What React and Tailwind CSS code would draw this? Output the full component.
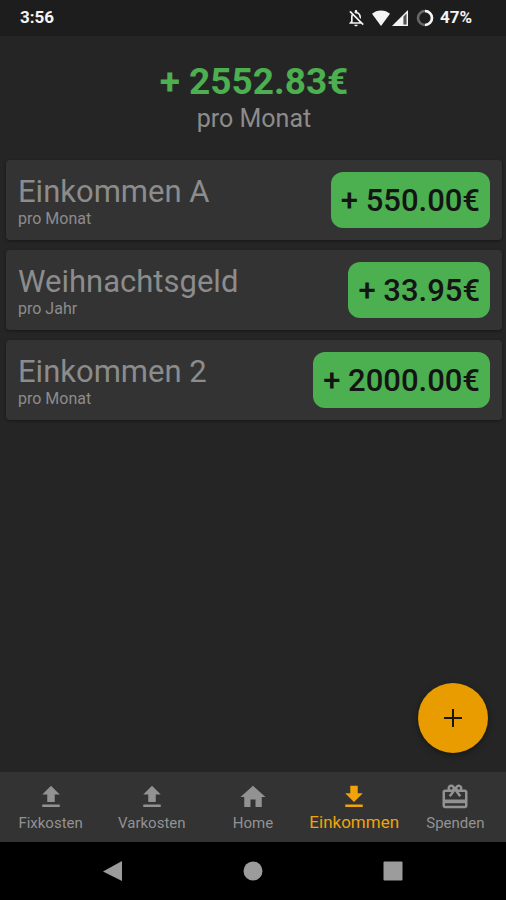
import { MdCardGiftcard, MdFileDownload, MdFileUpload, MdHome, MdOutlineNotificationsOff } from 'react-icons/md';

const incomes = [
  { name: 'Einkommen A', period: 'pro Monat', amount: '+ 550.00€' },
  { name: 'Weihnachtsgeld', period: 'pro Jahr', amount: '+ 33.95€' },
  { name: 'Einkommen 2', period: 'pro Monat', amount: '+ 2000.00€' },
];

const tabs = [
  { label: 'Fixkosten', icon: MdFileUpload },
  { label: 'Varkosten', icon: MdFileUpload },
  { label: 'Home', icon: MdHome },
  { label: 'Einkommen', icon: MdFileDownload, active: true },
  { label: 'Spenden', icon: MdCardGiftcard },
];

function StatusBar() {
  return (
    <div className="flex h-9 items-center justify-between bg-[#1d1d1d] pr-[34px] pl-5 text-[17px] font-bold text-[#f4f4f4]">
      <span>3:56</span>
      <div className="flex items-center">
        <MdOutlineNotificationsOff className="size-5" />
        <svg className="ml-1.5 h-4 w-[18px]" viewBox="0 0 18 16" fill="currentColor">
          <path d="M0 3.8C2.4 1.7 5.5.5 9 .5s6.600 1.200 9 3.300L9 16z" />
        </svg>
        <svg className="ml-0.5 size-4" viewBox="0 0 16 16" fill="currentColor">
          <path fillRule="evenodd" d="M16 0v16H0zM14.500 3.600 11.500 6.600V14.500h3z" />
          <path d="M11.500 6.600 14.500 3.600V14.500h-3z" opacity="0.25" />
        </svg>
        {/* Battery ring */}
        <svg className="ml-2 size-[18px]" viewBox="0 0 18 18" fill="none" stroke="currentColor" strokeWidth="2.600">
          <circle cx="9" cy="9" r="7" opacity="0.35" />
          <path d="M9 2a7 7 0 0 1 0 14" />
        </svg>
        <span className="ml-1.5">47%</span>
      </div>
    </div>
  );
}

function IncomeCard({ name, period, amount }) {
  return (
    <li className="flex h-20 items-center justify-between rounded-sm bg-[#333333] px-3 shadow-[0_1px_3px_rgba(0,0,0,0.4)]">
      <div className="pt-0.5">
        <h2 className="text-[31px] leading-9 text-[#8c8c8c]">{name}</h2>
        <p className="text-base leading-[18px] text-[#8c8c8c]">{period}</p>
      </div>
      <span className="flex h-14 items-center rounded-xl bg-[#4caf50] px-2.5 pt-0.5 text-[31px] font-medium text-[#141414]">
        {amount}
      </span>
    </li>
  );
}

function Tab({ label, icon: Icon, active }) {
  return (
    <button
      type="button"
      aria-current={active ? 'page' : undefined}
      className={`flex min-w-0 flex-1 flex-col items-center pt-2.5 ${active ? 'text-[#f0a30a]' : 'text-[#929292]'}`}
    >
      <Icon className="size-[30px]" />
      <span className={active ? 'text-[17px] leading-5' : 'text-[15px] leading-[22px]'}>{label}</span>
    </button>
  );
}

export default function App() {
  return (
    <div className="flex min-h-screen flex-col bg-[#252525] font-['Roboto',sans-serif]">
      <StatusBar />

      <main className="relative flex-1 px-1.5 pr-1">
        <header className="pt-6 text-center">
          <h1 className="text-[37px] leading-[44px] font-bold text-[#4caf50]">+ 2552.83€</h1>
          <p className="text-[25px] leading-[30px] text-[#8c8c8c]">pro Monat</p>
        </header>

        <ul className="mt-[26px] flex flex-col gap-2.5">
          {incomes.map((income) => (
            <IncomeCard key={income.name} {...income} />
          ))}
        </ul>

        <button
          type="button"
          aria-label="Einkommen hinzufügen"
          className="absolute right-[18px] bottom-[19px] flex size-[70px] items-center justify-center rounded-full bg-[#e89c00] text-[#1a1400] shadow-[0_2px_6px_rgba(0,0,0,0.4)]"
        >
          <svg className="size-[18px]" viewBox="0 0 18 18" stroke="currentColor" strokeWidth="2">
            <path d="M9 0v18M0 9h18" />
          </svg>
        </button>
      </main>

      <nav className="flex h-[70px] bg-[#333333]">
        {tabs.map((tab) => (
          <Tab key={tab.label} {...tab} />
        ))}
      </nav>

      {/* System navigation */}
      <div className="flex h-[58px] items-center justify-center gap-[120px] bg-black text-[#9c9c9c]">
        <button type="button" aria-label="Zurück">
          <svg className="size-5" viewBox="0 0 20 20" fill="currentColor">
            <path d="M19 0v20L0 10.500z" />
          </svg>
        </button>
        <button type="button" aria-label="Startbildschirm">
          <svg className="size-5" viewBox="0 0 20 20" fill="currentColor">
            <circle cx="10" cy="10" r="9.500" />
          </svg>
        </button>
        <button type="button" aria-label="Letzte Apps">
          <svg className="size-5" viewBox="0 0 20 20" fill="currentColor">
            <rect x="0.500" y="0.500" width="19" height="19" rx="1" />
          </svg>
        </button>
      </div>
    </div>
  );
}
